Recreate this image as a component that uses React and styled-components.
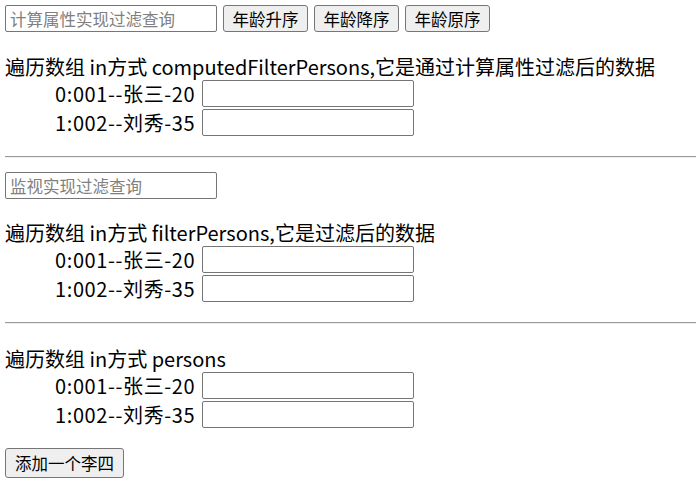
import React, { useState, useMemo } from 'react';
import styled, { createGlobalStyle } from 'styled-components';

const GlobalStyle = createGlobalStyle`
  html, body {
    margin: 0;
    padding: 0;
    background: #fff;
  }
  body {
    font-family: "Noto Sans CJK SC", sans-serif;
    font-size: 20px;
    color: #000;
  }
`;

const Page = styled.div`
  display: flex;
  flex-direction: column;
  align-items: flex-start;
  padding: 5px 0 0 5px;
`;

const Toolbar = styled.div`
  display: flex;
  align-items: center;
  gap: 6px;
  height: 27px;
  margin-bottom: ${(p) => p.$after || 22}px;
`;

const TextBox = styled.input`
  box-sizing: border-box;
  width: 212px;
  height: 27px;
  padding: 0 4px;
  border: 1px solid #767676;
  border-radius: 2px;
  font-family: "Noto Sans CJK SC", sans-serif;
  font-size: 16.5px;
  color: #000;
  background: #fff;
  outline: none;
  &::placeholder {
    color: #808080;
  }
`;

const Button = styled.button`
  box-sizing: border-box;
  height: ${(p) => (p.$tall ? 30 : 27)}px;
  padding: 0 ${(p) => (p.$tall ? 9 : 8.5)}px;
  border: 1px solid #767676;
  border-radius: 3px;
  background: #efefef;
  font-family: "Noto Sans CJK SC", sans-serif;
  font-size: 16.5px;
  color: #000;
  cursor: pointer;
`;

const List = styled.div`
  display: flex;
  flex-direction: column;
  margin-bottom: 20px;
`;

const Title = styled.div`
  height: 26px;
  line-height: 26px;
  white-space: nowrap;
`;

const Rows = styled.div`
  display: flex;
  flex-direction: column;
  gap: 2px;
  padding-left: 50px;
`;

const Row = styled.div`
  display: flex;
  align-items: center;
  gap: 6px;
  height: 27px;
  white-space: nowrap;
`;

const Label = styled.span`
  width: 141px;
  letter-spacing: 0.6px;
`;

const Rule = styled.hr`
  align-self: stretch;
  margin: 0 0 ${(p) => p.$after || 14}px 0;
  height: 0;
  border: none;
  border-top: 1px solid #9a9a9a;
  border-bottom: 1px solid #eeeeee;
`;

const PersonList = ({ title, persons }) => {
  return (
    <List>
      <Title>{title}</Title>
      <Rows>
        {persons.map((p, index) => (
          <Row key={p.id}>
            <Label>
              {index}:{p.id}--{p.name}-{p.age}
            </Label>
            <TextBox />
          </Row>
        ))}
      </Rows>
    </List>
  );
};

export default function App() {
  const [persons, setPersons] = useState([
    { id: '001', name: '张三', age: 20 },
    { id: '002', name: '刘秀', age: 35 },
  ]);
  const [keyword, setKeyword] = useState('');
  const [watchKeyword, setWatchKeyword] = useState('');
  const [order, setOrder] = useState(0);

  const computedFilterPersons = useMemo(() => {
    const list = persons.filter((p) => p.name.includes(keyword));
    if (order === 1) list.sort((a, b) => a.age - b.age);
    if (order === 2) list.sort((a, b) => b.age - a.age);
    return list;
  }, [persons, keyword, order]);

  const filterPersons = persons.filter((p) => p.name.includes(watchKeyword));

  return (
    <>
      <GlobalStyle />
      <Page>
        <Toolbar>
          <TextBox
            placeholder="计算属性实现过滤查询"
            value={keyword}
            onChange={(e) => setKeyword(e.target.value)}
          />
          <Button onClick={() => setOrder(1)}>年龄升序</Button>
          <Button onClick={() => setOrder(2)}>年龄降序</Button>
          <Button onClick={() => setOrder(0)}>年龄原序</Button>
        </Toolbar>
        <PersonList
          title="遍历数组 in方式 computedFilterPersons,它是通过计算属性过滤后的数据"
          persons={computedFilterPersons}
        />
        <Rule />
        <Toolbar $after={21}>
          <TextBox
            placeholder="监视实现过滤查询"
            value={watchKeyword}
            onChange={(e) => setWatchKeyword(e.target.value)}
          />
        </Toolbar>
        <PersonList title="遍历数组 in方式 filterPersons,它是过滤后的数据" persons={filterPersons} />
        <Rule $after={22} />
        <PersonList title="遍历数组 in方式 persons" persons={persons} />
        <Button
          $tall
          onClick={() =>
            setPersons([...persons, { id: '003', name: '李四', age: 18 }])
          }
        >
          添加一个李四
        </Button>
      </Page>
    </>
  );
}
